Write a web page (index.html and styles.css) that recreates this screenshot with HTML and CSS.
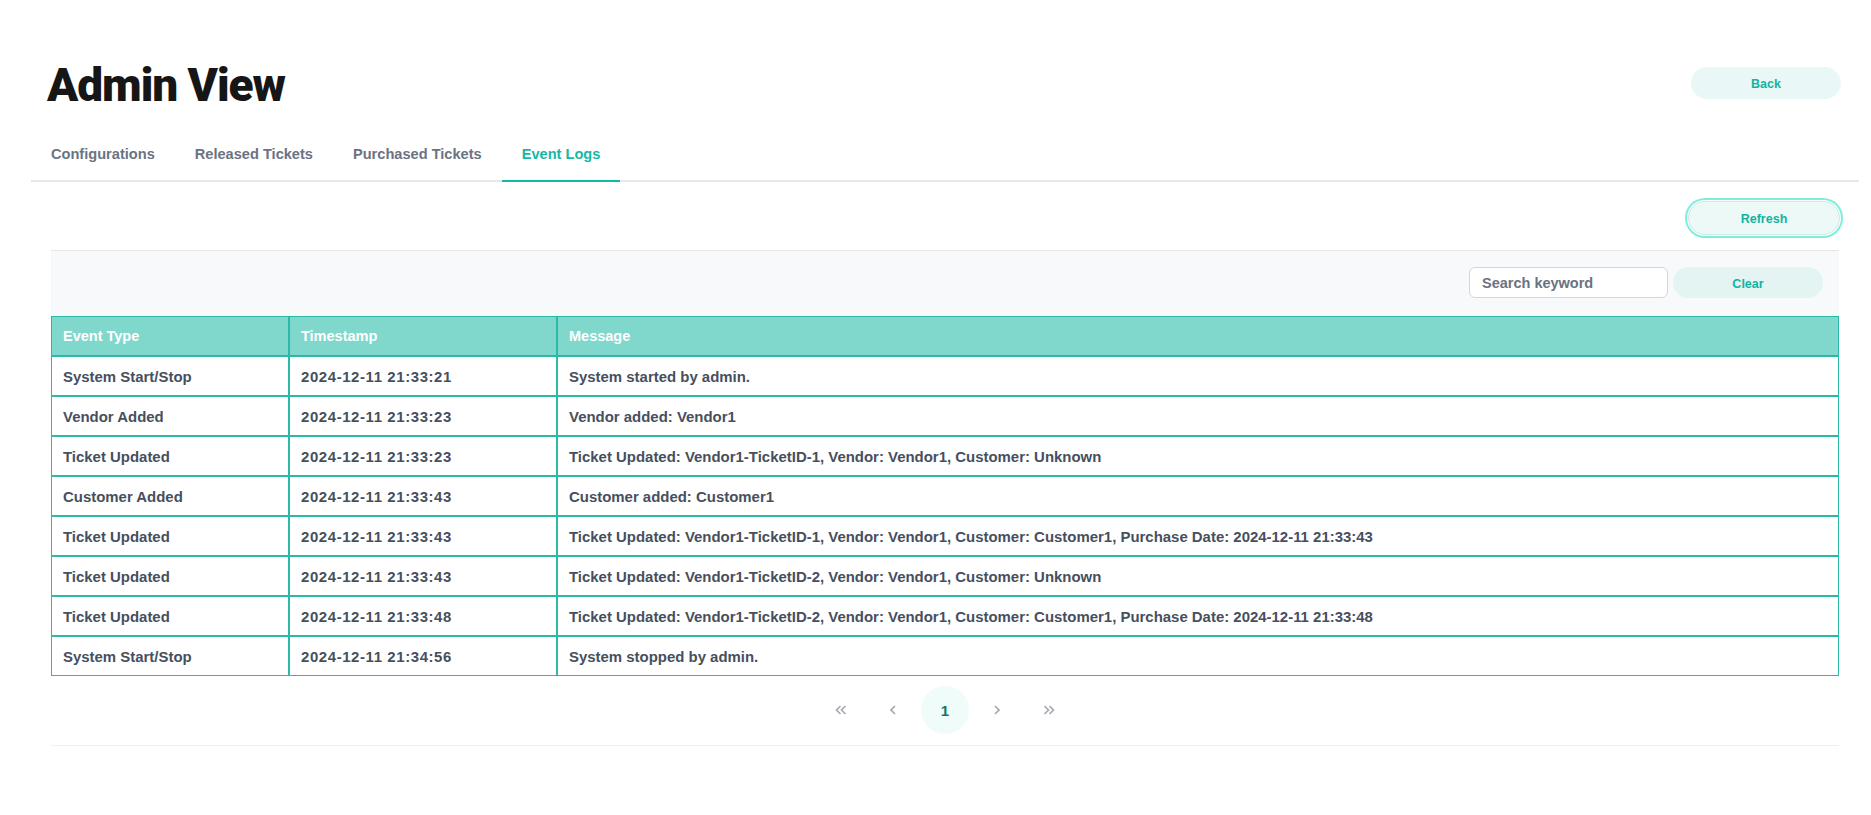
FILE: index.html
```html
<!DOCTYPE html>
<html lang="en">
<head>
<meta charset="utf-8">
<title>Admin View</title>
<link rel="stylesheet" href="styles.css">
</head>
<body>
<div class="page">
  <header class="header">
    <h1 class="title">Admin View</h1>
    <button class="btn btn-back">Back</button>
  </header>
  <nav class="tabs">
    <div class="tab">Configurations</div>
    <div class="tab">Released Tickets</div>
    <div class="tab">Purchased Tickets</div>
    <div class="tab active">Event Logs</div>
  </nav>
  <div class="toolbar">
    <button class="btn btn-refresh">Refresh</button>
  </div>
  <section class="panel">
    <div class="search-row">
      <input class="search" type="text" placeholder="Search keyword">
      <button class="btn btn-clear">Clear</button>
    </div>
    <table class="logs">
      <thead>
        <tr><th class="c1">Event Type</th><th class="c2">Timestamp</th><th>Message</th></tr>
      </thead>
      <tbody>
        <tr><td>System Start/Stop</td><td class="ts">2024-12-11 21:33:21</td><td>System started by admin.</td></tr>
        <tr><td>Vendor Added</td><td class="ts">2024-12-11 21:33:23</td><td>Vendor added: Vendor1</td></tr>
        <tr><td>Ticket Updated</td><td class="ts">2024-12-11 21:33:23</td><td>Ticket Updated: Vendor1-TicketID-1, Vendor: Vendor1, Customer: Unknown</td></tr>
        <tr><td>Customer Added</td><td class="ts">2024-12-11 21:33:43</td><td>Customer added: Customer1</td></tr>
        <tr><td>Ticket Updated</td><td class="ts">2024-12-11 21:33:43</td><td>Ticket Updated: Vendor1-TicketID-1, Vendor: Vendor1, Customer: Customer1, Purchase Date: 2024-12-11 21:33:43</td></tr>
        <tr><td>Ticket Updated</td><td class="ts">2024-12-11 21:33:43</td><td>Ticket Updated: Vendor1-TicketID-2, Vendor: Vendor1, Customer: Unknown</td></tr>
        <tr><td>Ticket Updated</td><td class="ts">2024-12-11 21:33:48</td><td>Ticket Updated: Vendor1-TicketID-2, Vendor: Vendor1, Customer: Customer1, Purchase Date: 2024-12-11 21:33:48</td></tr>
        <tr><td>System Start/Stop</td><td class="ts">2024-12-11 21:34:56</td><td>System stopped by admin.</td></tr>
      </tbody>
    </table>
    <div class="pager">
      <span class="pg"><svg width="12" height="10" viewBox="0 0 12 10"><polyline points="5.5,1 1.5,5 5.5,9" fill="none" stroke="#a3a7b0" stroke-width="1.6"/><polyline points="10.5,1 6.5,5 10.5,9" fill="none" stroke="#a3a7b0" stroke-width="1.6"/></svg></span>
      <span class="pg"><svg width="6" height="10" viewBox="0 0 6 10"><polyline points="5,1 1,5 5,9" fill="none" stroke="#a3a7b0" stroke-width="1.6"/></svg></span>
      <span class="pg current">1</span>
      <span class="pg"><svg width="6" height="10" viewBox="0 0 6 10"><polyline points="1,1 5,5 1,9" fill="none" stroke="#a3a7b0" stroke-width="1.6"/></svg></span>
      <span class="pg"><svg width="12" height="10" viewBox="0 0 12 10"><polyline points="1.5,1 5.5,5 1.5,9" fill="none" stroke="#a3a7b0" stroke-width="1.6"/><polyline points="6.5,1 10.5,5 6.5,9" fill="none" stroke="#a3a7b0" stroke-width="1.6"/></svg></span>
    </div>
  </section>
</div>
</body>
</html>
```
FILE: styles.css
```css
* { box-sizing: border-box; }
html, body { margin: 0; padding: 0; background: #ffffff; }
body {
  font-family: "Liberation Sans", Arial, sans-serif;
  font-weight: 700;
  font-size: 14px;
  color: #474f5e;
}
.header {
  display: flex;
  justify-content: space-between;
  align-items: flex-start;
  padding: 61px 30px 0 47px;
}
.title {
  margin: 0;
  font-family: Roboto, "Liberation Sans", sans-serif;
  font-weight: 900;
  font-size: 46px;
  line-height: 48px;
  letter-spacing: -1.05px;
  color: #161616;
}
.btn {
  font-family: "Liberation Sans", Arial, sans-serif;
  font-weight: 700;
  font-size: 12.5px;
  color: #12b3a0;
  border: none;
  border-radius: 999px;
  cursor: pointer;
  padding: 0;
}
.btn-back {
  width: 150px;
  height: 32px;
  margin-top: 6px;
  padding-top: 2px;
  background: #e9f8f6;
}
.tabs {
  display: flex;
  margin: 23px 12px 0 31px;
  border-bottom: 2px solid #e5e7eb;
}
.tab {
  padding: 12px 20px 16px;
  line-height: 20px;
  font-size: 14.6px;
  color: #6b7383;
  border-bottom: 2px solid transparent;
  margin-bottom: -2px;
}
.tab.active {
  color: #14b8a6;
  border-bottom-color: #14b8a6;
}
.toolbar {
  display: flex;
  justify-content: flex-end;
  padding: 19px 31px 0 0;
}
.btn-refresh {
  width: 152px;
  height: 34px;
  padding-top: 2px;
  background: #ecf9f7;
  border: 1px solid #c9ece6;
  box-shadow: 0 0 0 1px #ffffff, 0 0 0 3px #7eeedb;
}
.panel {
  margin: 15px 32px 0 51px;
  background: #f8f9fb;
  border-top: 1px solid #e5e7eb;
}
.search-row {
  display: flex;
  justify-content: flex-end;
  gap: 5px;
  padding: 16px 16px 18px;
}
.search {
  width: 199px;
  height: 31px;
  border: 1px solid #d3d6dc;
  border-radius: 6px;
  background: #ffffff;
  padding: 0 12px;
  font-family: "Liberation Sans", Arial, sans-serif;
  font-weight: 700;
  font-size: 14.5px;
  color: #474f5e;
  outline: none;
}
.search::placeholder { color: #6b7280; }
.btn-clear {
  width: 150px;
  height: 31px;
  padding-top: 2px;
  background: #e3f4f3;
}
.logs {
  width: 100%;
  table-layout: fixed;
  border-collapse: separate;
  border-spacing: 0;
  background: #ffffff;
}
.logs th, .logs td {
  border: 1px solid #2bbaa7;
  height: 40px;
  padding: 0 11px;
  text-align: left;
  vertical-align: middle;
  font-size: 14.95px;
  white-space: nowrap;
}
.logs th {
  background: #80d8cd;
  color: #ffffff;
  font-size: 14.5px;
}
.logs td.ts { letter-spacing: 0.6px; }
.logs th.c1 { width: 238px; }
.logs th.c2 { width: 268px; }
.pager {
  display: flex;
  justify-content: center;
  align-items: center;
  gap: 4px;
  padding: 10px 0 11px;
  background: #ffffff;
  border-bottom: 1px solid #eef0f2;
}
.pg {
  width: 48px;
  height: 48px;
  display: flex;
  align-items: center;
  justify-content: center;
  border-radius: 50%;
}
.pg.current {
  background: #effcf9;
  color: #0f766e;
  font-size: 15px;
}
```
